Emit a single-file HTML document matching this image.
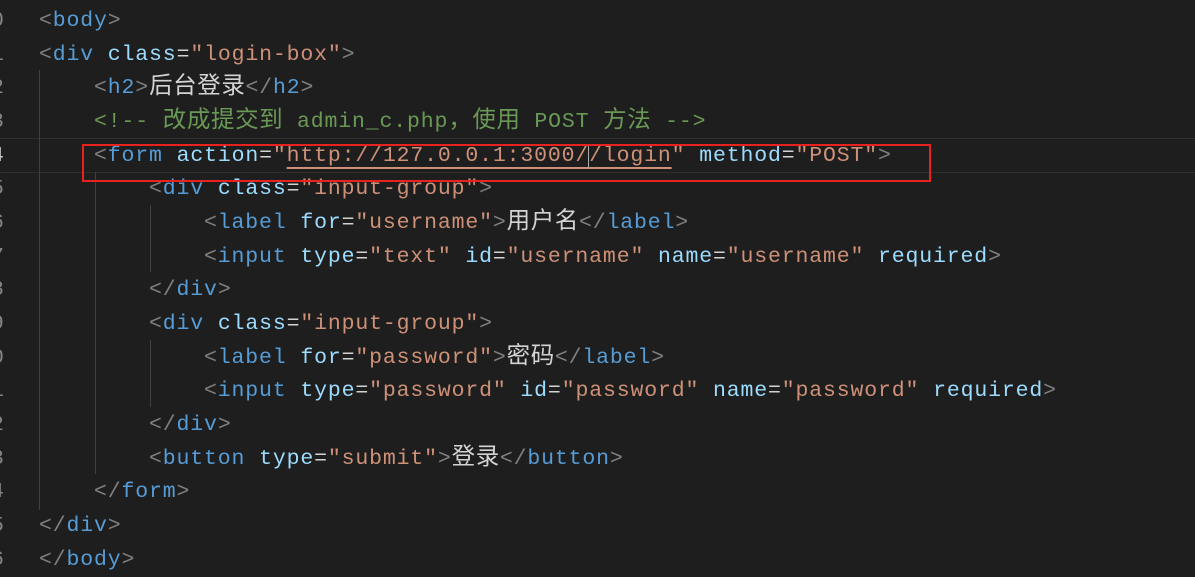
<!DOCTYPE html>
<html><head><meta charset="utf-8"><style>
html,body{margin:0;padding:0;background:#1e1e1e;width:1195px;height:564px;overflow:hidden}
.l{position:absolute;left:39px;height:34px;line-height:34px;white-space:pre;font-family:"Liberation Mono","Noto Sans CJK SC",monospace;font-size:21.5px;letter-spacing:0.85px;color:#d4d4d4}
.n{position:absolute;left:-9px;height:34px;line-height:34px;font-family:"Liberation Mono",monospace;font-size:21.5px;color:#858585}
.p{color:#808080}.t{color:#569cd6}.a{color:#9cdcfe}.s{color:#ce9178}.c{color:#6a9955}
.g{position:absolute;width:1px;background:#404040}
.cj{font-size:23.5px;letter-spacing:0.6px}
</style></head><body>
<div style="position:absolute;left:0;top:138px;width:1195px;height:33px;border-top:1px solid #2f2f2f;border-bottom:1px solid #2f2f2f"></div>
<div class="g" style="left:39px;top:70px;height:440px"></div>
<div class="g" style="left:95px;top:172px;height:302px"></div>
<div class="g" style="left:150px;top:205px;height:67px"></div>
<div class="g" style="left:150px;top:340px;height:67px"></div>

<div class="n" style="top:4px">0</div>
<div class="n" style="top:38px">1</div>
<div class="n" style="top:71px">2</div>
<div class="n" style="top:105px">3</div>
<div class="n" style="top:139px;color:#c6c6c6">4</div>
<div class="n" style="top:172px">5</div>
<div class="n" style="top:206px">6</div>
<div class="n" style="top:240px">7</div>
<div class="n" style="top:273px">8</div>
<div class="n" style="top:307px">9</div>
<div class="n" style="top:341px">0</div>
<div class="n" style="top:374px">1</div>
<div class="n" style="top:408px">2</div>
<div class="n" style="top:442px">3</div>
<div class="n" style="top:475px">4</div>
<div class="n" style="top:509px">5</div>
<div class="n" style="top:543px">6</div>

<div class="l" style="top:4px"><span class="p">&lt;</span><span class="t">body</span><span class="p">&gt;</span></div>
<div class="l" style="top:38px"><span class="p">&lt;</span><span class="t">div</span> <span class="a">class</span>=<span class="s">"login-box"</span><span class="p">&gt;</span></div>
<div class="l" style="top:71px">    <span class="p">&lt;</span><span class="t">h2</span><span class="p">&gt;</span><span class="cj">后台登录</span><span class="p">&lt;/</span><span class="t">h2</span><span class="p">&gt;</span></div>
<div class="l c" style="top:105px">    &lt;!-- <span class="cj">改成提交到</span> admin_c.php<span class="cj">，使用</span> POST <span class="cj">方法</span> --&gt;</div>
<div class="l" style="top:139px">    <span class="p">&lt;</span><span class="t">form</span> <span class="a">action</span>=<span class="s">"<span style="text-decoration:underline;text-underline-offset:6px">http://127.0.0.1:3000/<span style="border-left:1px solid #aeafad;margin-left:-1px"></span>/login</span>"</span> <span class="a">method</span>=<span class="s">"POST"</span><span class="p">&gt;</span></div>
<div class="l" style="top:172px">        <span class="p">&lt;</span><span class="t">div</span> <span class="a">class</span>=<span class="s">"input-group"</span><span class="p">&gt;</span></div>
<div class="l" style="top:206px">            <span class="p">&lt;</span><span class="t">label</span> <span class="a">for</span>=<span class="s">"username"</span><span class="p">&gt;</span><span class="cj">用户名</span><span class="p">&lt;/</span><span class="t">label</span><span class="p">&gt;</span></div>
<div class="l" style="top:240px">            <span class="p">&lt;</span><span class="t">input</span> <span class="a">type</span>=<span class="s">"text"</span> <span class="a">id</span>=<span class="s">"username"</span> <span class="a">name</span>=<span class="s">"username"</span> <span class="a">required</span><span class="p">&gt;</span></div>
<div class="l" style="top:273px">        <span class="p">&lt;/</span><span class="t">div</span><span class="p">&gt;</span></div>
<div class="l" style="top:307px">        <span class="p">&lt;</span><span class="t">div</span> <span class="a">class</span>=<span class="s">"input-group"</span><span class="p">&gt;</span></div>
<div class="l" style="top:341px">            <span class="p">&lt;</span><span class="t">label</span> <span class="a">for</span>=<span class="s">"password"</span><span class="p">&gt;</span><span class="cj">密码</span><span class="p">&lt;/</span><span class="t">label</span><span class="p">&gt;</span></div>
<div class="l" style="top:374px">            <span class="p">&lt;</span><span class="t">input</span> <span class="a">type</span>=<span class="s">"password"</span> <span class="a">id</span>=<span class="s">"password"</span> <span class="a">name</span>=<span class="s">"password"</span> <span class="a">required</span><span class="p">&gt;</span></div>
<div class="l" style="top:408px">        <span class="p">&lt;/</span><span class="t">div</span><span class="p">&gt;</span></div>
<div class="l" style="top:442px">        <span class="p">&lt;</span><span class="t">button</span> <span class="a">type</span>=<span class="s">"submit"</span><span class="p">&gt;</span><span class="cj">登录</span><span class="p">&lt;/</span><span class="t">button</span><span class="p">&gt;</span></div>
<div class="l" style="top:475px">    <span class="p">&lt;/</span><span class="t">form</span><span class="p">&gt;</span></div>
<div class="l" style="top:509px"><span class="p">&lt;/</span><span class="t">div</span><span class="p">&gt;</span></div>
<div class="l" style="top:543px"><span class="p">&lt;/</span><span class="t">body</span><span class="p">&gt;</span></div>

<div style="position:absolute;left:82px;top:144px;width:845px;height:34px;border:2px solid #e8221e"></div>
</body></html>
